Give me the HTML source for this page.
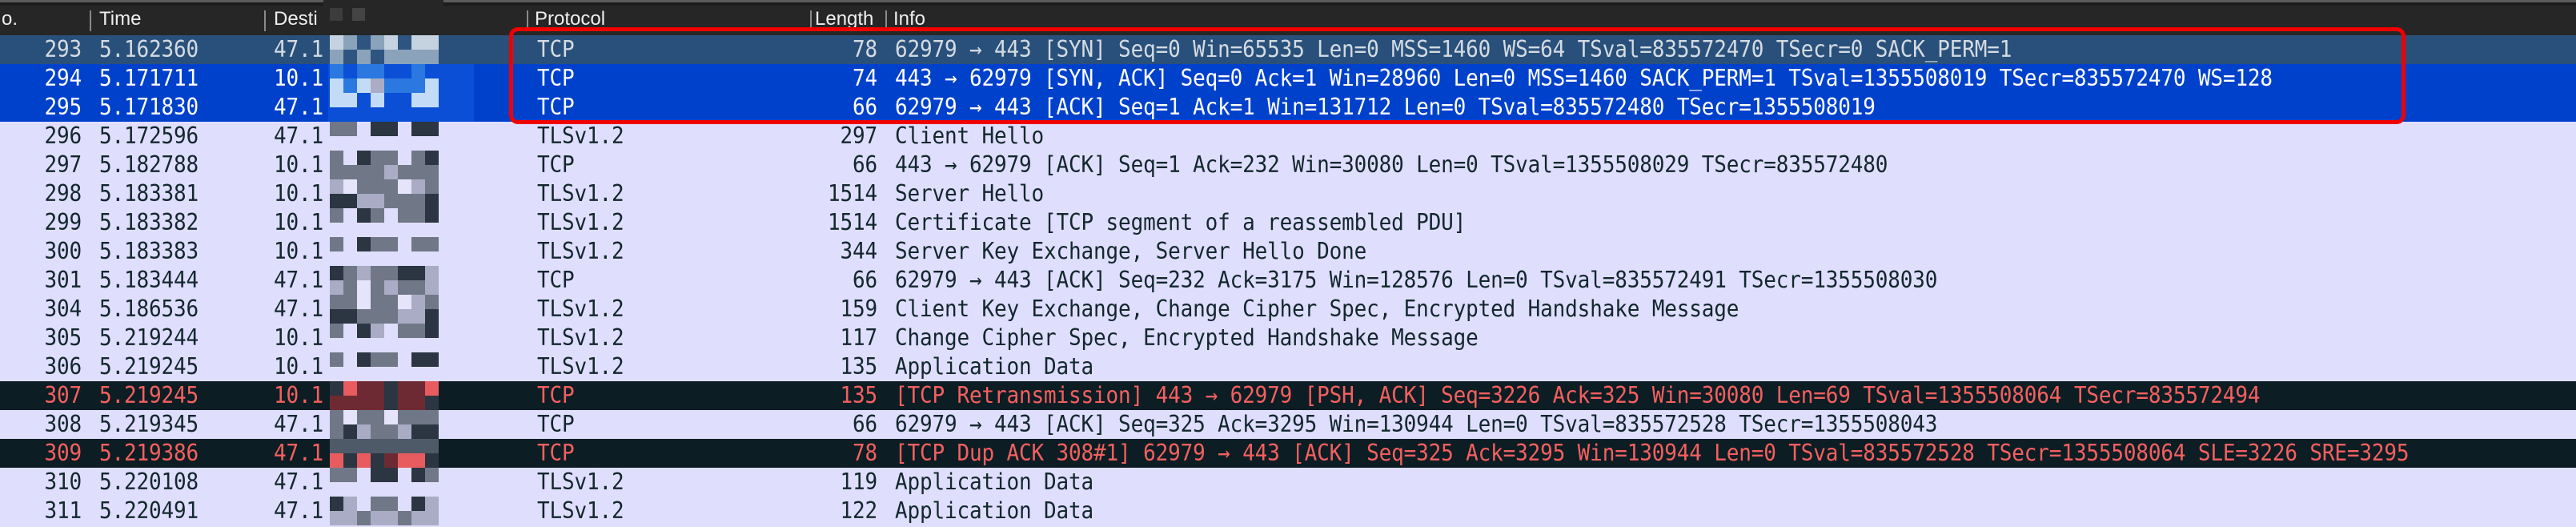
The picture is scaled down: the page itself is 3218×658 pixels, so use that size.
<!DOCTYPE html>
<html><head><meta charset="utf-8"><style>
html,body{margin:0;padding:0;}
body{width:3218px;height:656px;overflow:hidden;background:#e0defd;position:relative;font-family:"DejaVu Sans Mono","Liberation Mono",monospace;}
.hdr{position:absolute;left:0;top:0;width:3218px;height:44px;background:#262626;}
.hdr .t1{position:absolute;left:0;top:0;width:100%;height:3px;background:#5c5c5c;}
.hdr .t2{position:absolute;left:0;top:3px;width:100%;height:4px;background:#1c1c1c;}
.hl{position:absolute;top:10px;font:24px "Liberation Sans",sans-serif;color:#eee;line-height:28px;}
.sep{position:absolute;top:13px;width:2px;height:26px;background:#8a8a8a;}
.row{position:absolute;left:0;width:3218px;height:36px;font-size:26px;letter-spacing:-0.15px;line-height:36px;white-space:pre;color:#12272e;}
.row span{position:absolute;top:0;transform:scaleY(1.1);}
.no{right:3116px;text-align:right;}
.tm{left:124px;}
.ds{left:342px;}
.pr{left:671px;}
.ln{right:2122px;text-align:right;}
.inf{left:1118px;}
.r293{background:#29507a;color:#d4dbe3;}
.sel{background:#0041cc;color:#fff;}
.bad{background:#0d1d24;color:#f4605f;}
.box{position:absolute;left:636px;top:34px;width:2369px;height:121px;border:5px solid #f00000;border-radius:11px;box-sizing:border-box;}
#pix{position:absolute;left:0;top:0;}
</style></head><body>
<div class="hdr"><div class="t1"></div><div class="t2"></div>
<div class="hl" style="left:2px">o.</div>
<div class="sep" style="left:112px"></div><div class="hl" style="left:124px">Time</div>
<div class="sep" style="left:330px"></div><div class="hl" style="left:342px">Desti</div>
<div class="sep" style="left:658px"></div><div class="hl" style="left:668px">Protocol</div>
<div class="sep" style="left:1012px"></div><div class="hl" style="left:1018px;width:88px;overflow:hidden">Length</div>
<div class="sep" style="left:1106px"></div><div class="hl" style="left:1116px">Info</div>
</div>

<div class="row r293" style="top:44px"><span class="no">293</span><span class="tm">5.162360</span><span class="ds">47.1</span><span class="pr">TCP</span><span class="ln">78</span><span class="inf">62979 → 443 [SYN] Seq=0 Win=65535 Len=0 MSS=1460 WS=64 TSval=835572470 TSecr=0 SACK_PERM=1</span></div>
<div class="row sel" style="top:80px"><span class="no">294</span><span class="tm">5.171711</span><span class="ds">10.1</span><span class="pr">TCP</span><span class="ln">74</span><span class="inf">443 → 62979 [SYN, ACK] Seq=0 Ack=1 Win=28960 Len=0 MSS=1460 SACK_PERM=1 TSval=1355508019 TSecr=835572470 WS=128</span></div>
<div class="row sel" style="top:116px"><span class="no">295</span><span class="tm">5.171830</span><span class="ds">47.1</span><span class="pr">TCP</span><span class="ln">66</span><span class="inf">62979 → 443 [ACK] Seq=1 Ack=1 Win=131712 Len=0 TSval=835572480 TSecr=1355508019</span></div>
<div class="row" style="top:152px"><span class="no">296</span><span class="tm">5.172596</span><span class="ds">47.1</span><span class="pr">TLSv1.2</span><span class="ln">297</span><span class="inf">Client Hello</span></div>
<div class="row" style="top:188px"><span class="no">297</span><span class="tm">5.182788</span><span class="ds">10.1</span><span class="pr">TCP</span><span class="ln">66</span><span class="inf">443 → 62979 [ACK] Seq=1 Ack=232 Win=30080 Len=0 TSval=1355508029 TSecr=835572480</span></div>
<div class="row" style="top:224px"><span class="no">298</span><span class="tm">5.183381</span><span class="ds">10.1</span><span class="pr">TLSv1.2</span><span class="ln">1514</span><span class="inf">Server Hello</span></div>
<div class="row" style="top:260px"><span class="no">299</span><span class="tm">5.183382</span><span class="ds">10.1</span><span class="pr">TLSv1.2</span><span class="ln">1514</span><span class="inf">Certificate [TCP segment of a reassembled PDU]</span></div>
<div class="row" style="top:296px"><span class="no">300</span><span class="tm">5.183383</span><span class="ds">10.1</span><span class="pr">TLSv1.2</span><span class="ln">344</span><span class="inf">Server Key Exchange, Server Hello Done</span></div>
<div class="row" style="top:332px"><span class="no">301</span><span class="tm">5.183444</span><span class="ds">47.1</span><span class="pr">TCP</span><span class="ln">66</span><span class="inf">62979 → 443 [ACK] Seq=232 Ack=3175 Win=128576 Len=0 TSval=835572491 TSecr=1355508030</span></div>
<div class="row" style="top:368px"><span class="no">304</span><span class="tm">5.186536</span><span class="ds">47.1</span><span class="pr">TLSv1.2</span><span class="ln">159</span><span class="inf">Client Key Exchange, Change Cipher Spec, Encrypted Handshake Message</span></div>
<div class="row" style="top:404px"><span class="no">305</span><span class="tm">5.219244</span><span class="ds">10.1</span><span class="pr">TLSv1.2</span><span class="ln">117</span><span class="inf">Change Cipher Spec, Encrypted Handshake Message</span></div>
<div class="row" style="top:440px"><span class="no">306</span><span class="tm">5.219245</span><span class="ds">10.1</span><span class="pr">TLSv1.2</span><span class="ln">135</span><span class="inf">Application Data</span></div>
<div class="row bad" style="top:476px"><span class="no">307</span><span class="tm">5.219245</span><span class="ds">10.1</span><span class="pr">TCP</span><span class="ln">135</span><span class="inf">[TCP Retransmission] 443 → 62979 [PSH, ACK] Seq=3226 Ack=325 Win=30080 Len=69 TSval=1355508064 TSecr=835572494</span></div>
<div class="row" style="top:512px"><span class="no">308</span><span class="tm">5.219345</span><span class="ds">47.1</span><span class="pr">TCP</span><span class="ln">66</span><span class="inf">62979 → 443 [ACK] Seq=325 Ack=3295 Win=130944 Len=0 TSval=835572528 TSecr=1355508043</span></div>
<div class="row bad" style="top:548px"><span class="no">309</span><span class="tm">5.219386</span><span class="ds">47.1</span><span class="pr">TCP</span><span class="ln">78</span><span class="inf">[TCP Dup ACK 308#1] 62979 → 443 [ACK] Seq=325 Ack=3295 Win=130944 Len=0 TSval=835572528 TSecr=1355508064 SLE=3226 SRE=3295</span></div>
<div class="row" style="top:584px"><span class="no">310</span><span class="tm">5.220108</span><span class="ds">47.1</span><span class="pr">TLSv1.2</span><span class="ln">119</span><span class="inf">Application Data</span></div>
<div class="row" style="top:620px"><span class="no">311</span><span class="tm">5.220491</span><span class="ds">47.1</span><span class="pr">TLSv1.2</span><span class="ln">122</span><span class="inf">Application Data</span></div>

<svg id="pix" width="3218" height="656" xmlns="http://www.w3.org/2000/svg">
<rect x="404" y="0" width="150" height="44" fill="#262626"/>
<rect x="412" y="10" width="16" height="16" fill="#3c3c3c"/><rect x="440" y="10" width="16" height="16" fill="#444"/>
<rect x="404" y="44" width="176" height="36" fill="#29507a"/>
<rect x="410" y="80" width="182" height="72" fill="#0a4fd6"/>
<rect x="412" y="476" width="166" height="36" fill="#0d1d24"/>
<rect x="412" y="548" width="190" height="36" fill="#0d1d24"/>
<g id="g"></g>
</svg>
<div class="box"></div>
<script>
var P=[
[44,"lmdmldll"],[62,"mdmdmmmm"],
[80,"bBbbBBbB"],[98,"LbLlbbbL"],[116,"LL.LB.LL"],
[152,"mm.dd.dd"],[188,"m.dmm.md"],[206,"mmmmlmmm"],[224,"lwmmmwlm"],[242,"ddllmmmd"],
[260,"m.dm.mmd"],[296,"m.dmm.mm"],[332,"dmlmmddl"],[350,"lmwmlmml"],[368,"mmwmmwlm"],[386,"ddmmmlld"],
[404,"m.dl.mmd"],[440,"m.dmm.dd"],[476,"dRrrdrrR"],[494,"rrrrdrrd"],[512,"mwmmwmmm"],[530,"mdlmmldd"],
[548,"gggggggg"],[566,"RdRdrRRd"],[584,"mm.dd.dm"],[620,"dl.mm.dl"],[638,"llmllmll"]];
var C={d:"#2b3642",m:"#707888",l:"#a9acc4",w:"#e6e4fb",R:"#e85c60",r:"#6e2a33",g:"#4f5a68",b:"#2a78e0",B:"#0a4fd6",L:"#c3dbf6"};
var C293={l:"#c5d3e0",m:"#8ba2bb",d:"#2e5580"};
var s="";
P.forEach(function(p){for(var i=0;i<8;i++){var k=p[1][i];if(k===".")continue;var c=(p[0]<80?C293[k]:C[k]);if(!c)continue;s+='<rect x="'+(412+i*17)+'" y="'+p[0]+'" width="17" height="18" fill="'+c+'"/>';}});
document.getElementById("g").innerHTML=s;
</script>
</body></html>
